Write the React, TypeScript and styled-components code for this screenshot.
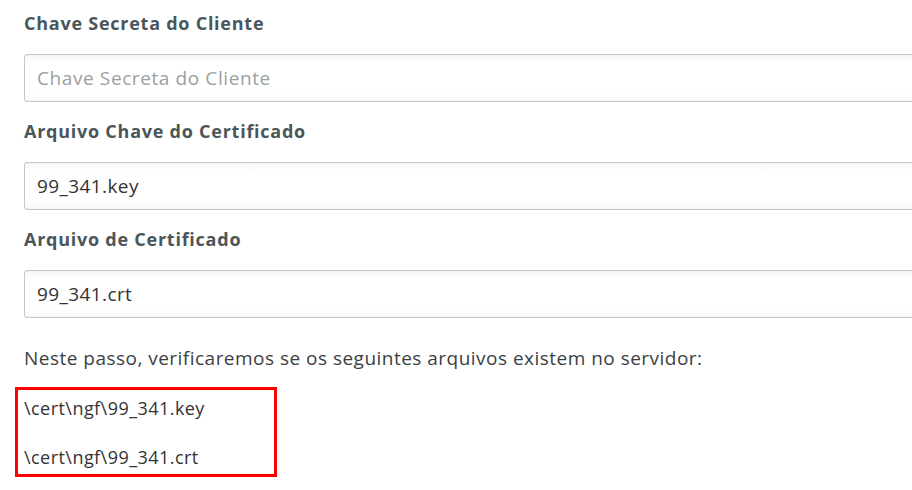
import React from "react";
import styled, { createGlobalStyle } from "styled-components";

const Global = createGlobalStyle`
  html, body { margin: 0; padding: 0; background: #fff; }
  body { font-family: "Open Sans", "Noto Sans", sans-serif; overflow: hidden; }
`;

const Page = styled.div`
  box-sizing: border-box;
  padding: 11px 0 0 24px;
  width: 912px;
`;

const Field = styled.div`
  display: flex;
  flex-direction: column;
  gap: 19px;
  margin-bottom: 17px;
`;

const Label = styled.label`
  font-size: 18px;
  line-height: 24px;
  font-weight: 700;
  letter-spacing: 0.75px;
  color: #4a5659;
`;

const Input = styled.input`
  box-sizing: border-box;
  width: 100%;
  height: 48px;
  border: 1px solid #c4c6c6;
  border-right: none;
  border-radius: 4px 0 0 4px;
  padding: 0 12px;
  font-family: inherit;
  font-size: 19px;
  letter-spacing: 0.4px;
  color: #333;
  background: linear-gradient(#f6f6f6 0px, #fff 8px, #fff 38px, #f6f6f6 47px);
  outline: none;
  &::placeholder {
    color: #9a9fa0;
    letter-spacing: 0.6px;
  }
`;

const Note = styled.p`
  margin: 28px 0 17px;
  font-size: 19px;
  line-height: 24px;
  letter-spacing: 0.48px;
  color: #3c4043;
`;

const Highlight = styled.div`
  margin-left: -9px;
  width: 262px;
  box-sizing: border-box;
  border: 3px solid #f00;
  padding: 6px 6px 5px;
  display: flex;
  flex-direction: column;
  gap: 25px;
`;

const Path = styled.div`
  font-size: 18px;
  line-height: 24px;
  letter-spacing: 0.45px;
  color: #333;
`;

export default function App() {
  return (
    <>
      <Global />
      <Page>
        <Field>
          <Label>Chave Secreta do Cliente</Label>
          <Input placeholder="Chave Secreta do Cliente" readOnly />
        </Field>
        <Field>
          <Label>Arquivo Chave do Certificado</Label>
          <Input value="99_341.key" readOnly />
        </Field>
        <Field>
          <Label>Arquivo de Certificado</Label>
          <Input value="99_341.crt" readOnly />
        </Field>
        <Note>Neste passo, verificaremos se os seguintes arquivos existem no servidor:</Note>
        <Highlight>
          <Path>\cert\ngf\99_341.key</Path>
          <Path>\cert\ngf\99_341.crt</Path>
        </Highlight>
      </Page>
    </>
  );
}
